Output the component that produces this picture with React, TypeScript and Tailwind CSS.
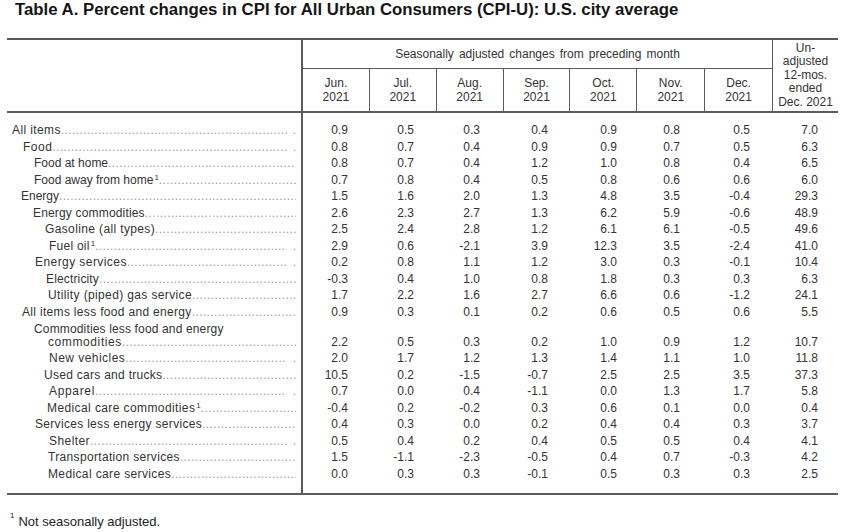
import React from 'react';

type Row = {
  label: string;
  pl: number;
  ls: number; // letter spacing, px
  v: string[];
  sup?: boolean;
  gap?: boolean;
  first?: string;
};

const rows: Row[] = [
  { label: 'All items', pl: 5, ls: 0.38, gap: true, v: ['0.9', '0.5', '0.3', '0.4', '0.9', '0.8', '0.5', '7.0'] },
  { label: 'Food', pl: 16, ls: 0.5, gap: true, v: ['0.8', '0.7', '0.4', '0.9', '0.9', '0.7', '0.5', '6.3'] },
  { label: 'Food at home', pl: 27, ls: 0, v: ['0.8', '0.7', '0.4', '1.2', '1.0', '0.8', '0.4', '6.5'] },
  { label: 'Food away from home', pl: 27, ls: 0, sup: true, v: ['0.7', '0.8', '0.4', '0.5', '0.8', '0.6', '0.6', '6.0'] },
  { label: 'Energy', pl: 14, ls: 0, v: ['1.5', '1.6', '2.0', '1.3', '4.8', '3.5', '-0.4', '29.3'] },
  { label: 'Energy commodities', pl: 26, ls: 0.17, v: ['2.6', '2.3', '2.7', '1.3', '6.2', '5.9', '-0.6', '48.9'] },
  { label: 'Gasoline (all types)', pl: 38, ls: 0.37, v: ['2.5', '2.4', '2.8', '1.2', '6.1', '6.1', '-0.5', '49.6'] },
  { label: 'Fuel oil', pl: 42, ls: 0.25, sup: true, gap: true, v: ['2.9', '0.6', '-2.1', '3.9', '12.3', '3.5', '-2.4', '41.0'] },
  { label: 'Energy services', pl: 28, ls: 0.43, gap: true, v: ['0.2', '0.8', '1.1', '1.2', '3.0', '0.3', '-0.1', '10.4'] },
  { label: 'Electricity', pl: 39, ls: 0.15, v: ['-0.3', '0.4', '1.0', '0.8', '1.8', '0.3', '0.3', '6.3'] },
  { label: 'Utility (piped) gas service', pl: 41, ls: 0.37, v: ['1.7', '2.2', '1.6', '2.7', '6.6', '0.6', '-1.2', '24.1'] },
  { label: 'All items less food and energy', pl: 15, ls: 0.32, v: ['0.9', '0.3', '0.1', '0.2', '0.6', '0.5', '0.6', '5.5'] },
  { label: 'commodities', first: 'Commodities less food and energy', pl: 41, ls: 0.6, v: ['2.2', '0.5', '0.3', '0.2', '1.0', '0.9', '1.2', '10.7'] },
  { label: 'New vehicles', pl: 42, ls: 0.47, gap: true, v: ['2.0', '1.7', '1.2', '1.3', '1.4', '1.1', '1.0', '11.8'] },
  { label: 'Used cars and trucks', pl: 37, ls: 0.28, v: ['10.5', '0.2', '-1.5', '-0.7', '2.5', '2.5', '3.5', '37.3'] },
  { label: 'Apparel', pl: 42, ls: 0.67, gap: true, v: ['0.7', '0.0', '0.4', '-1.1', '0.0', '1.3', '1.7', '5.8'] },
  { label: 'Medical care commodities', pl: 40, ls: 0.4, sup: true, v: ['-0.4', '0.2', '-0.2', '0.3', '0.6', '0.1', '0.0', '0.4'] },
  { label: 'Services less energy services', pl: 28, ls: 0.31, v: ['0.4', '0.3', '0.0', '0.2', '0.4', '0.4', '0.3', '3.7'] },
  { label: 'Shelter', pl: 42, ls: 0.43, gap: true, v: ['0.5', '0.4', '0.2', '0.4', '0.5', '0.5', '0.4', '4.1'] },
  { label: 'Transportation services', pl: 41, ls: 0.33, v: ['1.5', '-1.1', '-2.3', '-0.5', '0.4', '0.7', '-0.3', '4.2'] },
  { label: 'Medical care services', pl: 41, ls: 0.37, v: ['0.0', '0.3', '0.3', '-0.1', '0.5', '0.3', '0.3', '2.5'] },
];

const months = ['Jun.', 'Jul.', 'Aug.', 'Sep.', 'Oct.', 'Nov.', 'Dec.'];

// column cells: width + right padding for the figures
const cols = [
  'w-[67px] pr-[22px]',
  'w-[67px] pr-[23px]',
  'w-[67px] pr-[24px]',
  'w-[67px] pr-[23px]',
  'w-[67px] pr-[21px]',
  'w-[68px] pr-[26px]',
  'w-[67px] pr-[23px]',
  'w-[65px] pr-[20px]',
];

const DOTS = '.'.repeat(120);

const Sup = () => <sup className="text-[8px] -top-[4px] ml-[1px] tracking-normal">1</sup>;

const Label = ({ row }: { row: Row }) => (
  <div className="flex items-center h-full pr-[5px] min-w-0" style={{ paddingLeft: row.pl }}>
    <span className="whitespace-nowrap shrink-0" style={{ letterSpacing: row.ls }}>
      {row.label}
      {row.sup && <Sup />}
    </span>
    <span className="flex-1 overflow-hidden whitespace-nowrap text-[#999] tracking-[0.4px]">{DOTS}</span>
    {row.gap && <span className="ml-[6px] text-[#999]">.</span>}
  </div>
);

export default function App() {
  return (
    <div className="w-[858px] h-[532px] bg-white text-[#333] font-['Liberation_Sans',Arial,sans-serif] text-[12px] overflow-hidden">
      <h1 className="pl-[15px] h-[20px] leading-[20px] text-[16.8px] font-bold text-[#151515]">
        Table A. Percent changes in CPI for All Urban Consumers (CPI-U): U.S. city average
      </h1>

      <div className="ml-[7px] mt-[18px] w-[831px] border-t-2 border-b-2 border-[#5a5a5a]">
        {/* header */}
        <div className="flex h-[73px] border-b-2 border-[#5a5a5a]">
          <div className="w-[296px] border-r-2 border-[#5a5a5a]" />
          <div className="flex flex-col w-[470px] border-r border-[#5a5a5a]">
            <div className="h-[29px] border-b border-[#5a5a5a] flex items-center justify-center [word-spacing:1.7px]">
              Seasonally adjusted changes from preceding month
            </div>
            <div className="flex flex-1">
              {months.map((m, i) => (
                <div
                  key={m}
                  className={`flex flex-col items-center justify-center leading-[14px] ${i === 5 ? 'w-[68px]' : 'w-[67px]'} ${i < 6 ? 'border-r border-[#5a5a5a]' : ''}`}
                >
                  <span>{m}</span>
                  <span>2021</span>
                </div>
              ))}
            </div>
          </div>
          <div className="w-[65px] flex flex-col items-center justify-center leading-[13.5px] text-center">
            <span>Un-</span>
            <span>adjusted</span>
            <span>12-mos.</span>
            <span>ended</span>
            <span>Dec. 2021</span>
          </div>
        </div>

        {/* body */}
        <div className="flex">
          <div className="w-[296px] border-r-2 border-[#5a5a5a] pt-[9px] pb-[11px]">
            {rows.map((r) =>
              r.first ? (
                <div key={r.label} className="h-[30px] flex flex-col">
                  <div className="h-[13.5px] flex items-center whitespace-nowrap pl-[27px] tracking-[0.15px]">
                    <span className="relative top-[2px]">{r.first}</span>
                  </div>
                  <div className="h-[16.5px]">
                    <Label row={r} />
                  </div>
                </div>
              ) : (
                <div key={r.label} className="h-[16.5px]">
                  <Label row={r} />
                </div>
              )
            )}
          </div>
          <div className="flex-1 pt-[9px] pb-[11px]">
            {rows.map((r) => (
              <div key={r.label} className={`flex items-end ${r.first ? 'h-[30px]' : 'h-[16.5px]'}`}>
                {r.v.map((x, i) => (
                  <div key={i} className={`h-[16.5px] flex items-center justify-end ${cols[i]}`}>
                    {x}
                  </div>
                ))}
              </div>
            ))}
          </div>
        </div>
      </div>

      <div className="mt-[17px] pl-[10px] flex items-start text-[13px] text-[#222]">
        <span className="text-[8px] leading-[8px] mr-[4px]">1</span>
        <span className="leading-[16px] mt-[2px]">Not seasonally adjusted.</span>
      </div>
    </div>
  );
}
